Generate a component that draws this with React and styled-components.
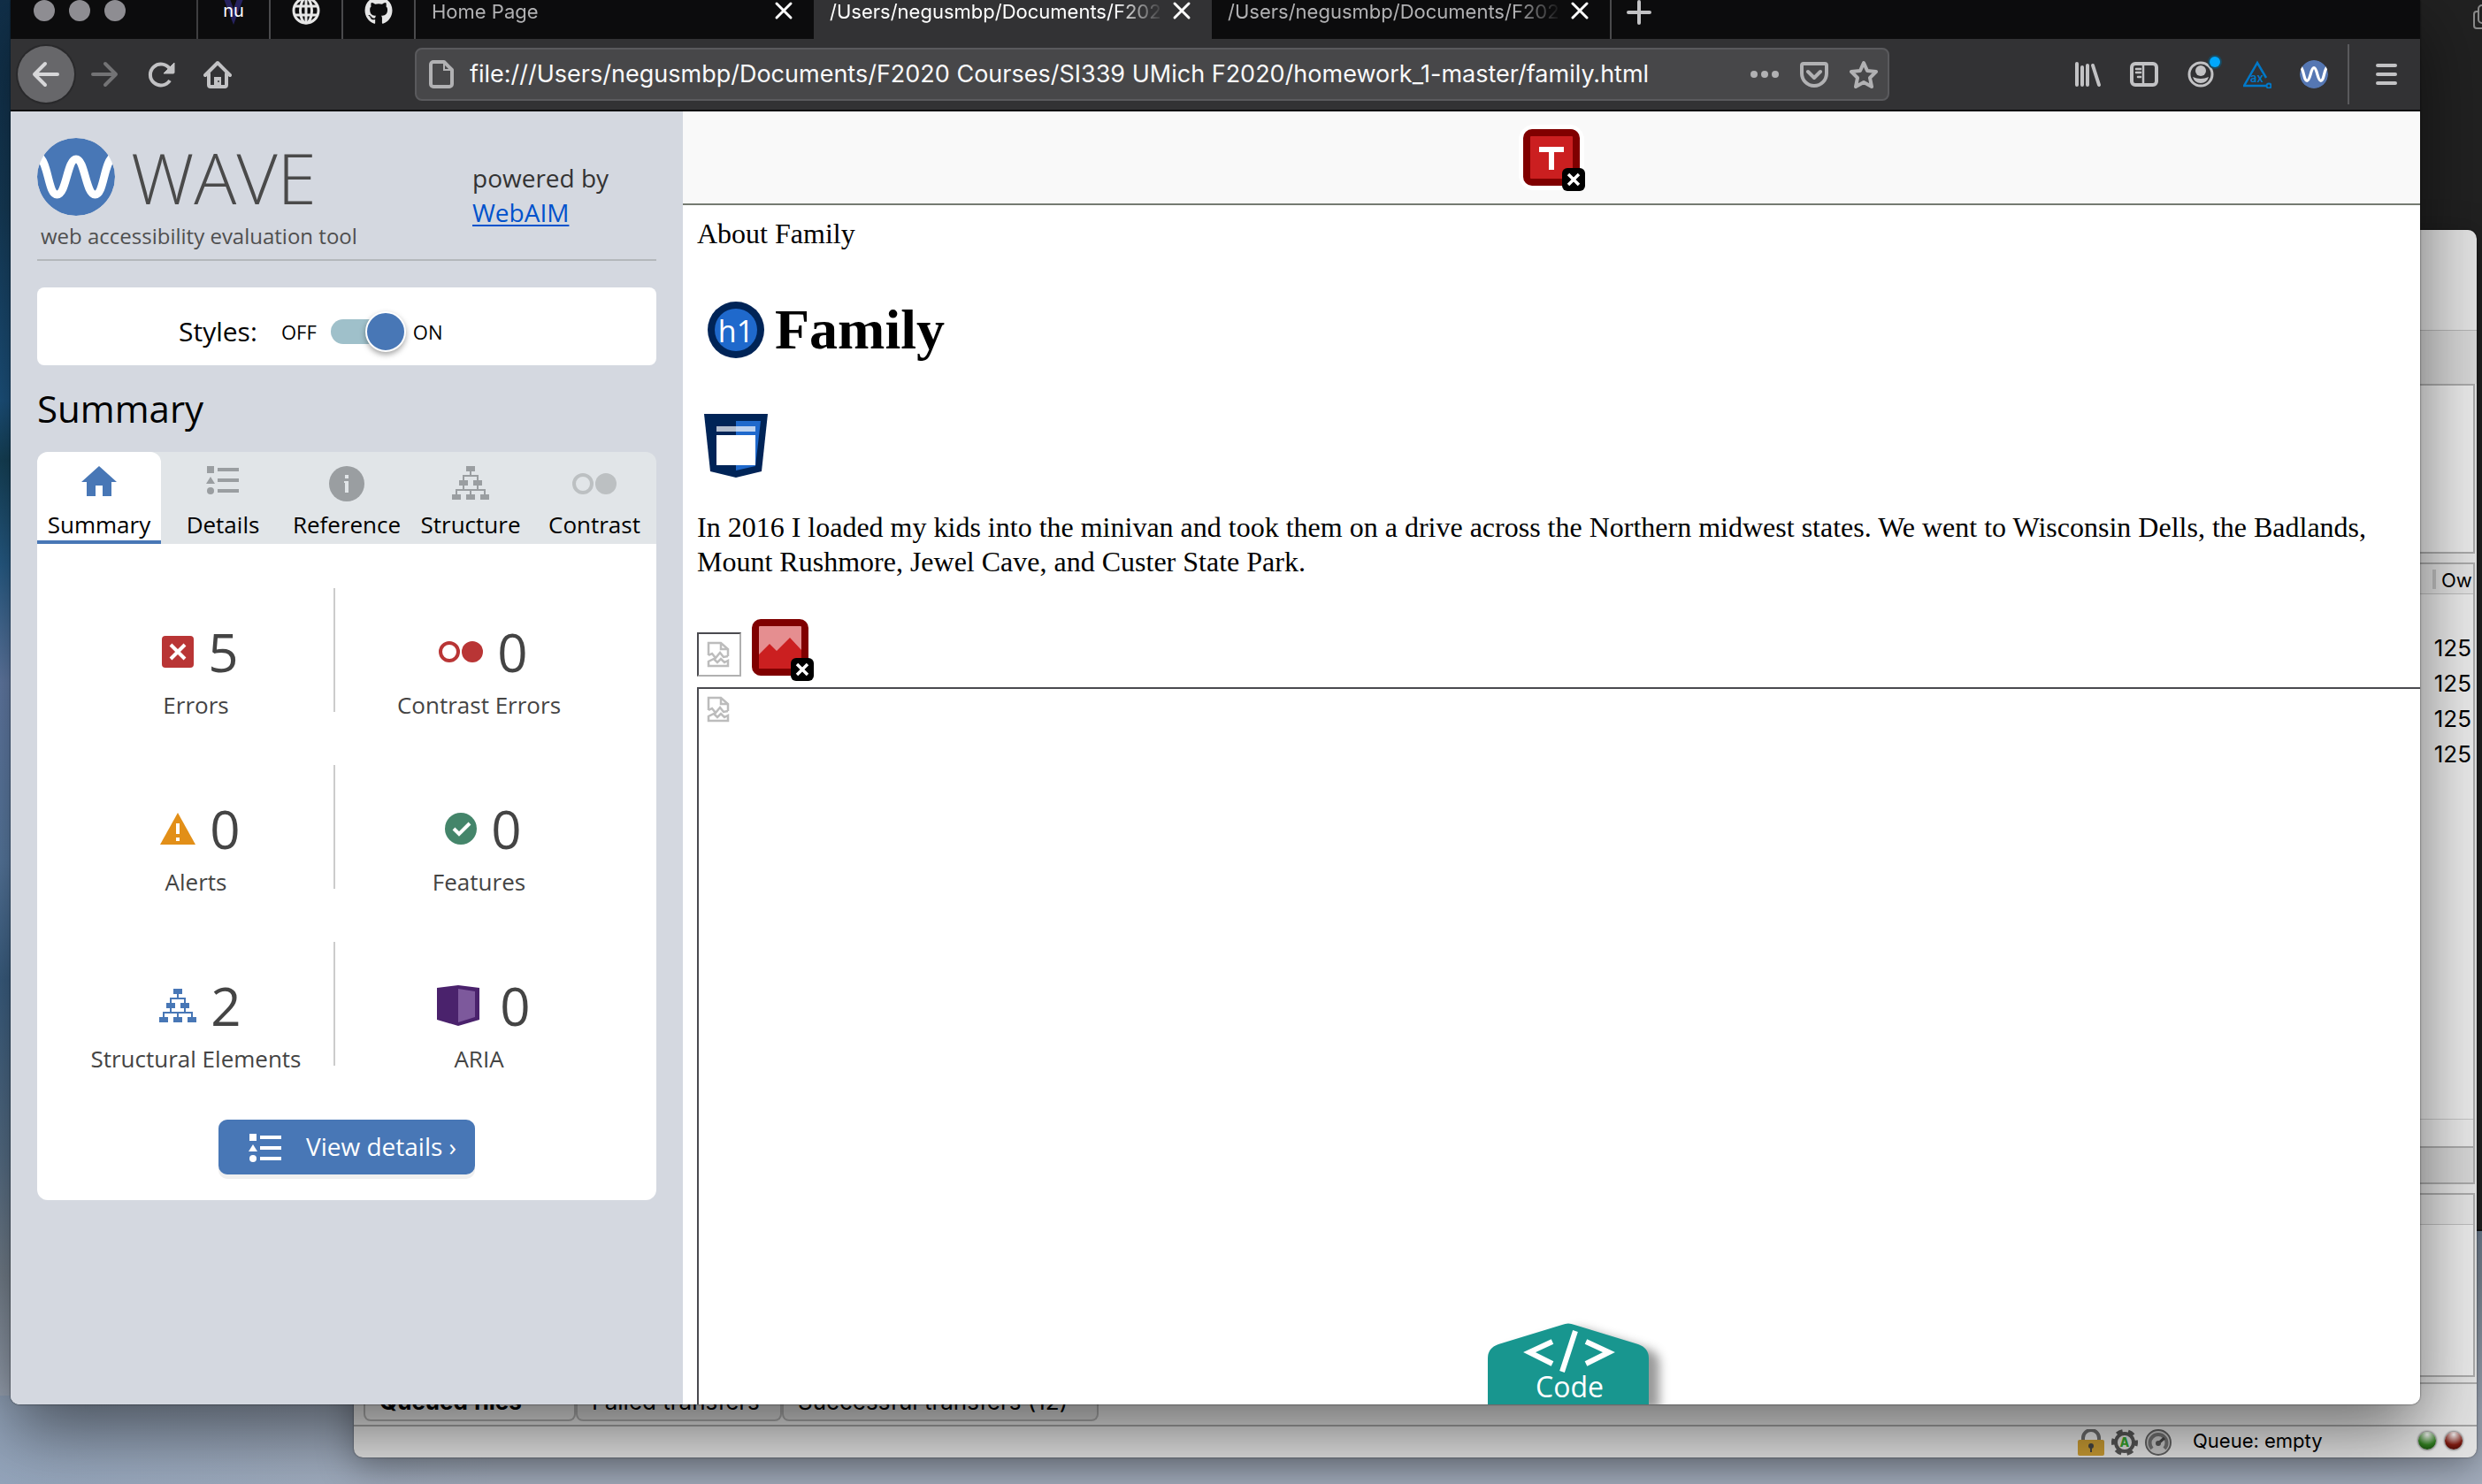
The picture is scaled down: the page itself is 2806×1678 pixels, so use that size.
import React from 'react';
import styled, { createGlobalStyle, css } from 'styled-components';
import { FaGithub } from 'react-icons/fa';

const Global = createGlobalStyle`
  *, *::before, *::after { box-sizing: border-box; }
  html, body, #root { height: 100%; }
  body { margin: 0; overflow: hidden; }
  button, input { font: inherit; color: inherit; border: 0; padding: 0; background: none; }
  svg { display: block; flex: none; }
  h1, h2, p { margin: 0; font-weight: 400; }
`;

const ui = "Inter, 'Liberation Sans', sans-serif";
const sans = "'Open Sans', 'Noto Sans', sans-serif";
const serif = "'Liberation Serif', 'Times New Roman', serif";

/* ---------- desktop ---------- */

const Desktop = styled.div`
  position: relative;
  height: 100vh;
  min-height: 900px;
  overflow: hidden;
  font-family: ${ui};
  background:
    linear-gradient(90deg, rgba(120, 150, 185, 0.35), rgba(120, 150, 185, 0) 20%) bottom / 100% 100px no-repeat,
    linear-gradient(#11304a 0%, #17405f 14%, #1f5a8a 27%, #17475f 31%, #2a6594 38%, #6b86b4 46%, #5f83ad 58%, #3f668c 66%, #5c7690 78%, #7b8794 86%, #a3adbd 95%, #a3adbd 100%);
`;

const DarkWindow = styled.div`
  position: absolute;
  top: 0;
  right: 0;
  bottom: 286px;
  width: 30%;
  background: #212121;
  border-bottom: 2px solid #111;
  display: flex;
  justify-content: flex-end;
  overflow: hidden;

  svg { margin: 4px -16px 0 0; }
`;

/* ---------- transfer window ---------- */

const TransferWindow = styled.section`
  position: absolute;
  left: 400px;
  right: 6px;
  top: 260px;
  bottom: 30px;
  border-radius: 10px;
  background: #e2e2e2;
  display: flex;
  flex-direction: column;
  overflow: hidden;
  font-size: 26px;
  line-height: 40px;
  color: #000;
  box-shadow: 0 0 2px rgba(0, 0, 0, 0.6), 0 10px 40px rgba(0, 0, 0, 0.35);
`;

const TitleArea = styled.div`
  height: 114px;
  flex: none;
  border-bottom: 1px solid #b4b4b4;
`;

const Strip = styled.div`
  height: ${(p) => p.$h}px;
  flex: none;
  background: #d6d6d6;
`;

const Pane = styled.div`
  flex: ${(p) => (p.$grow ? '1 1 0' : 'none')};
  ${(p) => p.$h && css`height: ${p.$h}px;`}
  margin: 0 2px ${(p) => (p.$last ? 6 : 10)}px 10px;
  border: 2px solid #a9a9a9;
  background: #eaeaea;
  display: flex;
  flex-direction: column;
  overflow: hidden;
`;

const PaneHeader = styled.div`
  height: 34px;
  flex: none;
  background: #e2e2e2;
  border-bottom: 1px solid #bdbdbd;
  display: flex;
  justify-content: flex-end;
  align-items: center;
  line-height: 34px;
`;

const HeaderCell = styled.div`
  width: 46px;
  height: 22px;
  flex: none;
  border-left: 4px solid #c0c0c0;
  padding-left: 6px;
  font-size: 22px;
  line-height: 24px;
  white-space: nowrap;
`;

const OwnerList = styled.ul`
  list-style: none;
  margin: 0;
  padding: 41px 2px 0 0;
  flex: 1;
  text-align: right;
`;

const PaneFooter = styled.div`
  height: 72px;
  flex: none;
  border-top: 1px solid #c4c4c4;
  background: linear-gradient(#e8e8e8 30px, #aaa 30px, #aaa 32px, #d6d6d6 32px);
`;

const QueueTabs = styled.div`
  display: flex;
  flex: none;
  height: 50px;
  padding: 0 11px 7px;
  border-top: 2px solid #aaa;
  border-bottom: 2px solid #a2a2a2;
`;

const QueueTab = styled.button`
  width: ${(p) => p.$w}px;
  height: 42px;
  padding: 0 0 0 16px;
  border: 2px solid #adadad;
  border-top: 0;
  border-radius: 0 0 8px 8px;
  background: ${(p) => (p.$active ? '#e2e2e2' : '#d6d6d6')};
  font-weight: ${(p) => (p.$active ? 700 : 400)};
  line-height: 24px;
  text-align: left;
  white-space: nowrap;
`;

const StatusBar = styled.footer`
  height: 35px;
  flex: none;
  display: flex;
  align-items: center;
  justify-content: flex-end;
  gap: 8px;
  padding-right: 15px;
  line-height: 32px;
`;

const QueueText = styled.span`
  width: 148px;
  margin: 0 98px 4px 16px;
  font-size: 22px;
  white-space: nowrap;
`;

const Led = styled.span`
  width: 20px;
  height: 20px;
  margin: 0 1px 3px;
  border-radius: 50%;
  background: radial-gradient(circle at 50% 15%, #e8e8e8 0, ${(p) => p.$c} 60%, ${(p) => p.$d} 100%);
  box-shadow: 0 0 2px 1px rgba(0, 0, 0, 0.4);
`;

/* ---------- browser chrome ---------- */

const Browser = styled.main`
  position: absolute;
  left: 12px;
  right: 70px;
  top: 0;
  bottom: 90px;
  display: flex;
  flex-direction: column;
  overflow: hidden;
  border-radius: 0 0 10px 10px;
  background: #fff;
`;

const BrowserShadow = styled.div`
  position: absolute;
  left: 12px;
  right: 70px;
  top: 0;
  bottom: 90px;
  border-radius: 0 0 10px 10px;
  box-shadow: 0 0 2px rgba(0, 0, 0, 0.8), 0 30px 80px rgba(0, 0, 0, 0.52);
`;

const TabStrip = styled.div`
  display: flex;
  flex: none;
  height: 44px;
  background: #0c0c0d;
  color: #b1b1b3;
  font-size: 22px;
  line-height: 26px;
`;

const Lights = styled.div`
  width: 212px;
  flex: none;
  display: flex;
  gap: 16px;
  padding-left: 26px;
  border-right: 2px solid #3e3e40;
`;

const Light = styled.button`
  width: 24px;
  height: 24px;
  border-radius: 50%;
  background: #8e8d92;
`;

const PinnedTab = styled.button`
  width: 82px;
  flex: none;
  display: flex;
  justify-content: center;
  padding-bottom: 20px;
  align-items: center;
  border-right: 2px solid #4a4a4c;
  color: #e6e6e6;
`;

const Favicon = styled.span`
  color: #fff;
  display: grid;
  place-items: center;

  svg, span { grid-area: 1 / 1; }
  span { font-size: 20px; line-height: 24px; }
`;

const Tab = styled.div`
  width: 450px;
  flex: 0 1 auto;
  display: flex;
  align-items: flex-start;
  gap: 6px;
  padding: 0 20px 0 18px;
  background: ${(p) => (p.$active ? '#323234' : 'transparent')};
  color: ${(p) => (p.$active ? '#fff' : '#b1b1b3')};
`;

const TabTitle = styled.span`
  flex: 1;
  min-width: 0;
  white-space: nowrap;
  mask-image: linear-gradient(90deg, #000 calc(100% - 54px), transparent);
`;

const IconButton = styled.button`
  width: ${(p) => p.$w || 32}px;
  height: ${(p) => p.$h || 32}px;
  flex: none;
  display: grid;
  place-items: center;
  color: ${(p) => p.$c || '#c2c2c4'};
`;

const TabClose = styled(IconButton)`
  width: 28px;
  height: 24px;
  color: #fff;
`;

const NewTab = styled(IconButton)`
  width: 64px;
  height: 44px;
  border-left: 2px solid #4a4a4c;
  padding-bottom: 20px;
`;

const Toolbar = styled.div`
  height: 82px;
  flex: none;
  display: flex;
  align-items: center;
  background: #323234;
  border-bottom: 2px solid #0c0c0d;
`;

const NavGroup = styled.div`
  width: 457px;
  flex: none;
  display: flex;
  align-items: center;
  gap: 32px;
  padding-left: 8px;
`;

const BackButton = styled(IconButton)`
  width: 64px;
  height: 64px;
  margin-right: -14px;
  border-radius: 50%;
  background: #67676a;
  box-shadow: 0 0 0 2px #29292b;
  color: #d7d7d9;
`;

const AddressBar = styled.div`
  height: 60px;
  flex: 1 1 0;
  display: flex;
  align-items: center;
  gap: 24px;
  padding: 0 11px 0 14px;
  border: 2px solid #5a5a5d;
  border-radius: 8px;
  background: #474749;
`;

const AddressInput = styled.input`
  flex: 1;
  min-width: 0;
  height: 40px;
  margin-left: -6px;
  font-size: 27px;
  line-height: 40px;
  color: #f9f9fa;
  outline: none;
`;

const Extensions = styled.div`
  width: 600px;
  flex: none;
  display: flex;
  align-items: center;
  justify-content: flex-end;
  gap: 32px;
  padding-right: 22px;
`;

const Divider = styled.span`
  width: 2px;
  height: 68px;
  margin-right: -6px;
  margin-left: -10px;
  background: #5a5a5d;
`;

/* ---------- WAVE panel ---------- */

const Content = styled.div`
  flex: 1;
  min-height: 0;
  display: flex;
`;

const Panel = styled.aside`
  width: 760px;
  flex: none;
  padding: 30px;
  background: #d4d8e0;
  font-family: ${sans};
  color: #000;
`;

const Brand = styled.header`
  display: flex;
  justify-content: space-between;
  padding-bottom: 10px;
  border-bottom: 2px solid #b4b8bb;
`;

const LogoRow = styled.div`
  display: flex;
  align-items: center;
  gap: 18px;
  height: 88px;
  font-size: 80px;
  font-weight: 300;
  line-height: 90px;
  color: #4a4a4a;
`;

const Tagline = styled.p`
  padding: 7px 0 0 4px;
  font-size: 24px;
  line-height: 32px;
  color: #4f4f4f;
`;

const Powered = styled.p`
  width: 208px;
  padding-top: 26px;
  font-size: 28px;
  line-height: 39px;
  color: #333;

  a { display: block; color: #0052cc; text-underline-offset: 3px; }
`;

const StylesCard = styled.div`
  height: 88px;
  margin-top: 30px;
  padding: 12px 0 0 160px;
  display: flex;
  align-items: center;
  border-radius: 8px;
  background: #fff;
  font-size: 22px;
`;

const StylesLabel = styled.label`
  width: 116px;
  padding-bottom: 2px;
  font-size: 30px;
`;

const Switch = styled.input`
  appearance: none;
  width: 76px;
  height: 28px;
  margin: 0 17px 0 16px;
  border-radius: 14px;
  background: #9fc0ca;
  display: flex;
  align-items: center;
  justify-content: flex-end;

  &::after {
    content: '';
    width: 46px;
    height: 46px;
    flex: none;
    margin-right: -9px;
    border: 2px solid #fff;
    border-radius: 50%;
    background: #4877b6;
    box-shadow: 0 3px 6px rgba(0, 0, 0, 0.35);
  }
`;

const PanelTitle = styled.h2`
  margin: 21px 0;
  font-size: 42px;
  line-height: 56px;
`;

const Tabs = styled.div`
  display: grid;
  grid-template-columns: repeat(5, 1fr);
  border-radius: 12px 12px 0 0;
  background: #e1e5e8;
`;

const PanelTab = styled.button`
  height: 104px;
  padding: 16px 0 2px;
  display: flex;
  flex-direction: column;
  align-items: center;
  gap: 10px;
  border-bottom: 4px solid ${(p) => (p.$active ? '#4877b6' : 'transparent')};
  border-radius: ${(p) => (p.$active ? '12px 12px 0 0' : 0)};
  background: ${(p) => (p.$active ? '#fff' : 'none')};
  color: ${(p) => (p.$active ? '#4877b6' : '#9a9ea1')};

  span { font-size: 26px; line-height: 32px; color: #000; }
`;

const Results = styled.div`
  padding: 50px 38px 29px 24px;
  border-radius: 0 0 12px 12px;
  background: #fff;
`;

const Counts = styled.ul`
  list-style: none;
  margin: 0;
  padding: 0;
  display: grid;
  grid-template-columns: 311fr 327fr;
  row-gap: 60px;
`;

const Count = styled.li`
  height: 140px;
  padding-top: 42px;
  display: flex;
  flex-direction: column;
  align-items: center;
  gap: 14px;
  font-size: 26px;
  line-height: 32px;
  color: #444;

  &:nth-child(even) { border-left: 2px solid #ccc; }
`;

const CountValue = styled.div`
  display: flex;
  align-items: center;
  gap: 16px;
  padding-left: 10px;
  font-size: 60px;
  line-height: 60px;
`;

const ViewDetails = styled.button`
  display: flex;
  align-items: center;
  gap: 27px;
  width: 290px;
  height: 62px;
  margin: 61px 0 0 181px;
  padding: 0 0 2px 34px;
  border-radius: 10px;
  background: #4877b6;
  box-shadow: 0 5px 0 #f0f0f0;
  color: #fff;
  font-size: 28px;
  line-height: 40px;
  white-space: nowrap;
`;

/* ---------- inspected page ---------- */

const Page = styled.article`
  flex: 1;
  min-width: 0;
  display: flex;
  flex-direction: column;
  position: relative;
  font-family: ${serif};
  font-size: 32px;
  color: #000;
  overflow: hidden;
`;

const PageHeader = styled.div`
  height: 106px;
  flex: none;
  display: flex;
  justify-content: center;
  padding-top: 20px;
  border-bottom: 2px solid #757b72;
  background: #f9f9f9;
`;

const IconFrame = styled.span`
  width: 64px;
  height: 64px;
  position: relative;
  border-radius: 12px;
  box-shadow: 0 0 0 5px #fff;
`;

const Badge = styled.span`
  position: absolute;
  right: -6px;
  bottom: -6px;
`;

const PageBody = styled.div`
  flex: 1;
  min-height: 0;
  padding: 13px 0 0 16px;
  display: flex;
  flex-direction: column;
  line-height: 39px;
`;

const Heading = styled.h1`
  display: flex;
  align-items: center;
  gap: 12px;
  margin: 52px 0 58px 12px;
  font-size: 64px;
  font-weight: 700;
  line-height: 74px;
`;

const NavMark = styled.div`
  padding-left: 8px;
`;

const Story = styled.p`
  margin: 37px 16px 45px 0;
`;

const Pictures = styled.div`
  display: flex;
  align-items: flex-start;
  gap: 12px;
  height: 65px;
  margin-bottom: 12px;
`;

const Missing = styled.div`
  border: 2px solid #b0b0b0;
  border-color: #4a4a4f #b0b0b0 #b0b0b0 #4a4a4f;
  padding: 8px 9px;
  color: #bcbcbc;
  ${(p) => p.$fill ? css`
    flex: 1;
    border-right: 0;
    border-bottom: 0;
  ` : css`
    align-self: flex-end;
    width: 50px;
    height: 50px;
  `}
`;

const CodeButton = styled.button`
  position: absolute;
  left: 50%;
  bottom: 0;
  margin-left: -72px;
  width: 182px;
  height: 92px;
  color: #fff;
  font-family: ${sans};
  font-size: 32px;
  line-height: 40px;
  display: grid;

  svg, span { grid-area: 1 / 1; }
  svg { overflow: visible; filter: drop-shadow(12px 6px 6px rgba(0, 0, 0, 0.4)); }
  span { align-self: end; position: relative; padding-left: 3px; }
`;

/* ---------- drawings ---------- */

const Svg = ({ w = 32, h = 32, vb, children, ...rest }) => (
  <svg width={w} height={h} viewBox={vb || `0 0 ${w} ${h}`} fill="none" aria-hidden="true" {...rest}>{children}</svg>
);
const line = { stroke: 'currentColor', strokeWidth: 4, strokeLinecap: 'round', strokeLinejoin: 'round' };

const CloseX = () => <Svg w={22} h={22}><path d="M3 3l16 16M19 3L3 19" {...line} strokeWidth={3} /></Svg>;
const Plus = () => <Svg w={28} h={28}><path d="M14 2v24M2 14h24" {...line} /></Svg>;
const Globe = () => (
  <Svg><g stroke="currentColor" strokeWidth="3"><circle cx="16" cy="16" r="14" /><ellipse cx="16" cy="16" rx="6.5" ry="14" /><path d="M16 2v28M3 11h26M3 21h26" /></g></Svg>
);
const Back = () => <Svg><path d="M15 4L3 16l12 12M3 16h26" {...line} /></Svg>;
const Forward = () => <Svg><path d="M17 4l12 12-12 12M29 16H3" {...line} /></Svg>;
const Reload = () => (
  <Svg><path d="M26 23a12 12 0 1 1 0-13" {...line} strokeLinecap="butt" /><path d="M31 3v11a1 1 0 0 1-1 1H19z" fill="currentColor" stroke="currentColor" strokeLinejoin="round" /></Svg>
);
const Home = () => (
  <Svg><path d="M2 17L16 3l14 14M6 15v13a2 2 0 0 0 2 2h16a2 2 0 0 0 2-2V15" {...line} /><path d="M12 30V19h8v11z" fill="currentColor" /><circle cx="17" cy="24" r="1" fill="#323234" /></Svg>
);
const DocIcon = () => <Svg w={28} h={32}><path d="M5 2h12l9 9v16a3 3 0 0 1-3 3H5a3 3 0 0 1-3-3V5a3 3 0 0 1 3-3z" stroke="#b1b1b3" strokeWidth="4" strokeLinejoin="round" /><path d="M17 2v9h9" stroke="#b1b1b3" strokeWidth="2" /></Svg>;
const Dots = () => <Svg><g fill="currentColor"><circle cx="4" cy="16" r="4" /><circle cx="16" cy="16" r="4" /><circle cx="28" cy="16" r="4" /></g></Svg>;
const Pocket = () => <Svg><path d="M4 4h24a2 2 0 0 1 2 2v9a14 14 0 0 1-28 0V6a2 2 0 0 1 2-2zM9 13l7 7 7-7" {...line} /></Svg>;
const Star = () => <Svg><path d="M16 3l4 9 10 1-7 7 2 10-9-5-9 5 2-10-7-7 10-1z" {...line} /></Svg>;
const Library = () => <Svg><path d="M4 4v24M10 8v20M16 6v22M22 6l7 22" {...line} /></Svg>;
const SidebarIcon = () => (
  <Svg><rect x="2" y="4" width="28" height="24" rx="4" {...line} /><path d="M15 4v24" stroke="currentColor" strokeWidth="2.5" /><path d="M7 10h5M7 14h5M9 19h3" {...line} strokeWidth={2.5} /></Svg>
);
const Account = () => (
  <Svg overflow="visible"><circle cx="16" cy="16" r="13" stroke="currentColor" strokeWidth="3" /><circle cx="16" cy="12" r="6" fill="currentColor" /><path d="M7 19q9 4 18 0q-2 7-9 7t-9-7z" fill="currentColor" /><circle cx="32" cy="2" r="8" fill="#1a4a60" /><circle cx="32" cy="2" r="6" fill="#00a8ff" /></Svg>
);
const Axe = () => (
  <Svg><path d="M26 20L16 3 1 29h26" stroke="#0078c8" strokeWidth="2.5" /><circle cx="29" cy="29" r="2.5" stroke="#0078c8" strokeWidth="2" /><text x="8" y="25" fontFamily="Inter, sans-serif" fontSize="13" fontWeight="600" fill="#0078c8">ax</text></Svg>
);
const Wave = ({ size, id, fill = '#4877b6' }) => (
  <Svg w={size} h={size} vb="0 0 88 88">
    <clipPath id={id}><circle cx="44" cy="44" r="44" /></clipPath>
    <g clipPath={`url(#${id})`}><circle cx="44" cy="44" r="44" fill={fill} />
      <path d="M1 20C13 26 12 64 22.5 64S34 24 44 24 55 64 65.5 64 75 26 87 20" stroke="#fff" strokeWidth="9" /></g>
  </Svg>
);
const Menu = () => <Svg><path d="M6 6h20M6 16h20M6 26h20" {...line} /></Svg>;

const HomeTab = () => <Svg w={50} h={40}><path d="M25 0L5 18h6v16h10V22h8v12h10V18h6z" fill="currentColor" /></Svg>;
const ListArt = () => <g fill="currentColor"><path d="M0 0h8v8H0zM12 2h24v4H12zM4 12l5 8H-1zM12 14h24v4H12zM12 26h24v4H12z" /><circle cx="4" cy="28" r="4" /></g>;
const DetailsTab = () => <Svg w={50} h={40}><g transform="translate(7 0)"><ListArt /></g></Svg>;
const InfoTab = () => <Svg w={50} h={40}><circle cx="25" cy="20" r="20" fill="currentColor" /><path d="M23 10h4v4h-4zM22 17h5v13h-4V19h-1z" fill="#e1e5e8" /></Svg>;
const TreeArt = () => (
  <g><path d="M16 0h10v6H16zM8 16h10v6H8zM24 16h10v6H24zM0 32h10v6H0zM16 32h10v6H16zM32 32h10v6H32z" fill="currentColor" />
    <path d="M21 6v5M13 16v-5h16v5M13 22v5M29 22v5M5 32v-5h32v5M21 27v5" stroke="currentColor" strokeWidth="2" /></g>
);
const TreeTab = () => <Svg w={50} h={40}><g transform="translate(4 0)"><TreeArt /></g></Svg>;
const RingsArt = () => <g><circle cx="12" cy="12" r="10" stroke="currentColor" strokeWidth="4" /><circle cx="38" cy="12" r="12" fill="currentColor" /></g>;
const RingsTab = () => <Svg w={50} h={40} color="#bcc0c2"><g transform="translate(0 8)"><RingsArt /></g></Svg>;

const ErrorIcon = () => <Svg w={36} h={36}><rect width="36" height="36" rx="4" fill="#b93535" /><path d="M10 10l16 16M26 10L10 26" stroke="#fff" strokeWidth="4" /></Svg>;
const ContrastIcon = () => <Svg w={50} h={24} color="#b93535"><RingsArt /></Svg>;
const AlertIcon = () => <Svg w={40} h={36}><path d="M20 0l20 36H0z" fill="#e28f18" /><path d="M18 12h4v12h-4zM18 28h4v4h-4z" fill="#fff" /></Svg>;
const FeatureIcon = () => <Svg w={36} h={36}><circle cx="18" cy="18" r="18" fill="#44856a" /><path d="M10 18l6 6 12-12" stroke="#fff" strokeWidth="4" /></Svg>;
const StructIcon = () => <Svg w={42} h={38} color="#4877b6"><TreeArt /></Svg>;
const AriaIcon = () => <Svg w={56} h={46}><path d="M1 3l24-3 24 3v36l-24 7-24-7z" fill="#4a226c" /><path d="M25 4l19 3v29l-19 6z" fill="#7d599c" /></Svg>;

const BadgeX = () => (
  <Badge><Svg w={26} h={26}><rect width="26" height="26" rx="6" fill="#000" /><path d="M7 7l12 12M19 7L7 19" stroke="#fff" strokeWidth="3.5" /></Svg></Badge>
);
const TitleMissing = () => (
  <IconFrame><Svg w={64} h={64}><rect width="64" height="64" rx="10" fill="#800000" /><rect x="8" y="8" width="48" height="48" rx="1" fill="#cb1f20" /><path d="M18 20h28v6H35v20h-6V26H18z" fill="#fff" /></Svg><BadgeX /></IconFrame>
);
const AltMissing = () => (
  <IconFrame><Svg w={64} h={64}><rect width="64" height="64" rx="10" fill="#800000" /><rect x="8" y="8" width="48" height="48" rx="1" fill="#e58e90" /><path d="M8 40l12-12 8 8 15-15 13 14v21H8z" fill="#cb1f20" /></Svg><BadgeX /></IconFrame>
);
const H1Icon = () => (
  <Svg w={64} h={64}><circle cx="32" cy="32" r="32" fill="#002457" /><circle cx="32" cy="32" r="24" fill="#1f69cc" /><text x="32" y="46" textAnchor="middle" fontFamily="'Open Sans', sans-serif" fontSize="34" fontWeight="400" fill="#fff">h1</text></Svg>
);
const NavIcon = () => (
  <Svg w={72} h={72}><path d="M0 0h72l-7 65-29 7-29-7z" fill="#002457" /><path d="M36 8h28l-6 51-22 5z" fill="#1f69cc" /><path d="M14 14h44v6H14z" fill="#fff" opacity=".7" /><path d="M14 24h44v34H14z" fill="#fff" /></Svg>
);
const BrokenImage = () => (
  <Svg w={26} h={30}><g stroke="currentColor" strokeWidth="2.5"><path d="M2 16V2h14l8 7v8M16 2v7h8M2 16l4-2 4 5 5-6 4 5 5-1" /><path d="M2 28h22v-6l-4 2-4-4-4 4-4-4-6 3z" /></g></Svg>
);
const CodeShape = () => (
  <Svg w={182} h={92}><path d="M0 92V40q0-12 12-16L84 2q7-3 14 0l72 22q12 4 12 16v52z" fill="#18968f" /><path d="M73 21L47 33l26 13M111 21l26 12-26 13M99 9L84 55" stroke="#fff" strokeWidth="6" /></Svg>
);
const Lock = () => <Svg w={30} h={30}><path d="M6 14v-4a9 9 0 0 1 18 0v4" stroke="#6b6b6b" strokeWidth="4" /><rect y="12" width="30" height="18" rx="2" fill="#c79a33" /><circle cx="15" cy="19" r="3" fill="#444" /><path d="M14 19h2v7h-2z" fill="#444" /></Svg>;
const Gear = () => (
  <Svg w={30} h={30}><circle cx="15" cy="15" r="10" stroke="#555" strokeWidth="4" fill="#ddd" /><circle cx="15" cy="15" r="13" stroke="#555" strokeWidth="4" strokeDasharray="7 6.6" strokeDashoffset="3" /><text x="15" y="20" textAnchor="middle" fontFamily="Inter, sans-serif" fontSize="14" fontWeight="800" fill="#35a02c">A</text></Svg>
);
const Gauge = () => <Svg w={30} h={30}><circle cx="15" cy="15" r="14" stroke="#606060" strokeWidth="2" fill="#c4c4c4" /><path d="M8 22a9.5 9.5 0 1 1 14 0" stroke="#707070" strokeWidth="4" /><path d="M15 16l7-6" stroke="#444" strokeWidth="3" /><circle cx="15" cy="16" r="3" fill="#555" /></Svg>;

/* ---------- data ---------- */

const panelTabs = [
  ['Summary', HomeTab], ['Details', DetailsTab], ['Reference', InfoTab], ['Structure', TreeTab], ['Contrast', RingsTab],
];
const counts = [
  ['Errors', 5, ErrorIcon], ['Contrast Errors', 0, ContrastIcon],
  ['Alerts', 0, AlertIcon], ['Features', 0, FeatureIcon],
  ['Structural Elements', 2, StructIcon], ['ARIA', 0, AriaIcon],
];

export default function App() {
  return (
    <Desktop>
      <Global />
      <DarkWindow>
        <Svg w={28} h={30}><rect x="8" y="2" width="20" height="20" rx="4" stroke="#8a8a8a" strokeWidth="2" /><path d="M8 9H6a3 3 0 0 0-3 3v13a3 3 0 0 0 3 3h16" stroke="#8a8a8a" strokeWidth="2" /></Svg>
      </DarkWindow>

      <TransferWindow>
        <TitleArea />
        <Strip $h={60} />
        <Pane $h={192} />
        <Pane $grow>
          <PaneHeader><HeaderCell>Ow</HeaderCell></PaneHeader>
          <OwnerList>{[0, 1, 2, 3].map((i) => <li key={i}>125</li>)}</OwnerList>
          <PaneFooter />
        </Pane>
        <Pane $h={208} $last><PaneHeader /></Pane>
        <QueueTabs>
          <QueueTab $active $w={240}>Queued files</QueueTab>
          <QueueTab $w={233}>Failed transfers</QueueTab>
          <QueueTab $w={358}>Successful transfers (12)</QueueTab>
        </QueueTabs>
        <StatusBar>
          <Lock /><Gear /><Gauge />
          <QueueText>Queue: empty</QueueText>
          <Led $c="#2f7a1f" $d="#12400a" /><Led $c="#7a1a10" $d="#3d0805" />
        </StatusBar>
      </TransferWindow>

      <BrowserShadow />
      <Browser>
        <TabStrip>
          <Lights><Light aria-label="Close" /><Light aria-label="Minimize" /><Light aria-label="Zoom" /></Lights>
          <PinnedTab>
            <Favicon><Svg w={32} h={32}><path d="M4 0l12 32L28 0h-7l-5 14-5-14z" fill="#26225e" /></Svg><span>nu</span></Favicon>
          </PinnedTab>
          <PinnedTab aria-label="Globe"><Globe /></PinnedTab>
          <PinnedTab aria-label="GitHub"><FaGithub size={32} /></PinnedTab>
          <Tab><TabTitle>Home Page</TabTitle><TabClose aria-label="Close tab"><CloseX /></TabClose></Tab>
          <Tab $active><TabTitle>/Users/negusmbp/Documents/F202</TabTitle><TabClose aria-label="Close tab"><CloseX /></TabClose></Tab>
          <Tab><TabTitle>/Users/negusmbp/Documents/F202</TabTitle><TabClose aria-label="Close tab"><CloseX /></TabClose></Tab>
          <NewTab aria-label="New tab"><Plus /></NewTab>
        </TabStrip>
        <Toolbar>
          <NavGroup>
            <BackButton aria-label="Back"><Back /></BackButton>
            <IconButton aria-label="Forward" $c="#737375"><Forward /></IconButton>
            <IconButton aria-label="Reload"><Reload /></IconButton>
            <IconButton aria-label="Home"><Home /></IconButton>
          </NavGroup>
          <AddressBar>
            <DocIcon />
            <AddressInput aria-label="Address" defaultValue="file:///Users/negusmbp/Documents/F2020 Courses/SI339 UMich F2020/homework_1-master/family.html" />
            <IconButton aria-label="Page actions" $c="#b1b1b3"><Dots /></IconButton>
            <IconButton aria-label="Save to Pocket" $c="#b1b1b3"><Pocket /></IconButton>
            <IconButton aria-label="Bookmark" $c="#b1b1b3"><Star /></IconButton>
          </AddressBar>
          <Extensions>
            <IconButton aria-label="Library"><Library /></IconButton>
            <IconButton aria-label="Sidebars"><SidebarIcon /></IconButton>
            <IconButton aria-label="Account"><Account /></IconButton>
            <IconButton aria-label="axe"><Axe /></IconButton>
            <IconButton aria-label="WAVE"><Wave size={32} id="wave-small" fill="#5577b3" /></IconButton>
            <Divider />
            <IconButton aria-label="Menu"><Menu /></IconButton>
          </Extensions>
        </Toolbar>

        <Content>
          <Panel>
            <Brand>
              <div>
                <LogoRow><Wave size={88} id="wave-large" /><span>WAVE</span></LogoRow>
                <Tagline>web accessibility evaluation tool</Tagline>
              </div>
              <Powered>powered by <a href="#webaim">WebAIM</a></Powered>
            </Brand>
            <StylesCard>
              <StylesLabel htmlFor="styles">Styles:</StylesLabel>
              <span>OFF</span>
              <Switch id="styles" type="checkbox" role="switch" defaultChecked />
              <span>ON</span>
            </StylesCard>
            <PanelTitle>Summary</PanelTitle>
            <Tabs>
              {panelTabs.map(([name, Icon], i) => (
                <PanelTab key={name} $active={i === 0}><Icon /><span>{name}</span></PanelTab>
              ))}
            </Tabs>
            <Results>
              <Counts>
                {counts.map(([name, n, Icon]) => (
                  <Count key={name}><CountValue><Icon />{n}</CountValue>{name}</Count>
                ))}
              </Counts>
              <ViewDetails><Svg w={38} h={32} overflow="visible"><g transform="translate(1 2)"><ListArt /></g></Svg>View details ›</ViewDetails>
            </Results>
          </Panel>

          <Page>
            <PageHeader><TitleMissing /></PageHeader>
            <PageBody>
              <div>About Family</div>
              <Heading><H1Icon />Family</Heading>
              <NavMark><NavIcon /></NavMark>
              <Story>In 2016 I loaded my kids into the minivan and took them on a drive across the Northern midwest states. We went to Wisconsin Dells, the Badlands, Mount Rushmore, Jewel Cave, and Custer State Park.</Story>
              <Pictures><Missing><BrokenImage /></Missing><AltMissing /></Pictures>
              <Missing $fill><BrokenImage /></Missing>
            </PageBody>
            <CodeButton><CodeShape /><span>Code</span></CodeButton>
          </Page>
        </Content>
      </Browser>
    </Desktop>
  );
}
